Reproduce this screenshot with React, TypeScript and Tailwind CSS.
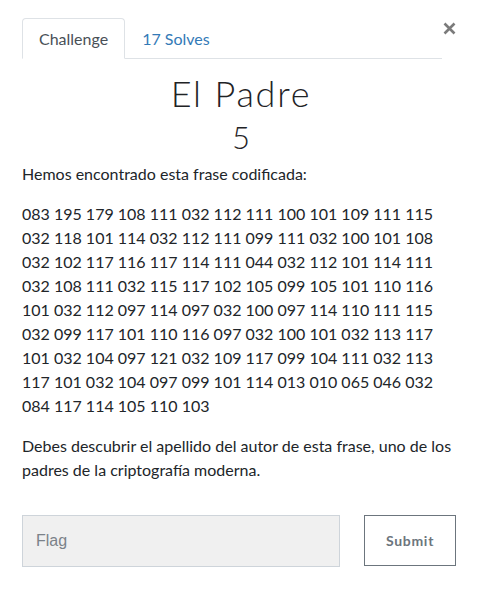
import { useState } from "react";

const CODE =
  "083 195 179 108 111 032 112 111 100 101 109 111 115 032 118 101 114 032 112 111 099 111 032 100 101 108 032 102 117 116 117 114 111 044 032 112 101 114 111 032 108 111 032 115 117 102 105 099 105 101 110 116 101 032 112 097 114 097 032 100 097 114 110 111 115 032 099 117 101 110 116 097 032 100 101 032 113 117 101 032 104 097 121 032 109 117 099 104 111 032 113 117 101 032 104 097 099 101 114 013 010 065 046 032 084 117 114 105 110 103";

const App: React.FC = () => {
  const [tab, setTab] = useState<"challenge" | "solves">("challenge");
  const [flag, setFlag] = useState("");

  return (
    <div className="relative bg-white w-[482px] min-h-[601px] px-[22px] pt-[18px] text-[#212529] font-['Lato','Noto_Sans',sans-serif]">
      <button className="absolute right-[26px] top-[22px] p-0 text-[#7b7b7b]" aria-label="Close">
        <svg width="13" height="13" viewBox="0 0 13 13">
          <path d="M1.5 1.5 L11.5 11.5 M11.5 1.5 L1.5 11.5" stroke="currentColor" strokeWidth="2.6" strokeLinecap="butt" />
        </svg>
      </button>

      <div className="flex w-[420px] border-b border-[#dee2e6]">
        <button
          onClick={() => setTab("challenge")}
          className={`h-[41px] px-4 -mb-px text-base rounded-t border ${
            tab === "challenge"
              ? "border-[#dee2e6] border-b-white bg-white text-[#495057]"
              : "border-transparent text-[#337ab7]"
          }`}
        >
          Challenge
        </button>
        <button
          onClick={() => setTab("solves")}
          className={`h-[41px] px-4 -mb-px text-base rounded-t border ${
            tab === "solves"
              ? "border-[#dee2e6] border-b-white bg-white text-[#495057]"
              : "border-transparent text-[#337ab7]"
          }`}
        >
          17 Solves
        </button>
      </div>

      <h2 className="mt-[13px] text-center text-[36px] leading-[1.2] tracking-[0.05em] font-light text-[#1f2326]">
        El Padre
      </h2>
      <h3 className="mt-1 text-center text-[31px] leading-[1.2] font-light text-[#1f2326]">5</h3>

      <div className="mt-[6px] text-base leading-6">
        <p className="mb-4">Hemos encontrado esta frase codificada:</p>
        <p className="mb-4">{CODE}</p>
        <p>
          Debes descubrir el apellido del autor de esta frase, uno de los padres de la criptografía moderna.
        </p>
      </div>

      <form className="flex gap-6 mt-[33px]" onSubmit={(e) => e.preventDefault()}>
        <input
          value={flag}
          onChange={(e) => setFlag(e.target.value)}
          placeholder="Flag"
          className="w-[318px] h-[52px] px-[13px] bg-[#f0f0f0] border border-[#ced4da] text-base outline-none placeholder:text-[#7b8289] font-['Liberation_Sans',Arial,sans-serif]"
        />
        <button className="w-[92px] h-[51px] border border-[#6c757d] text-[#6c757d] text-sm font-bold tracking-wider">
          Submit
        </button>
      </form>
    </div>
  );
};

export default App;
